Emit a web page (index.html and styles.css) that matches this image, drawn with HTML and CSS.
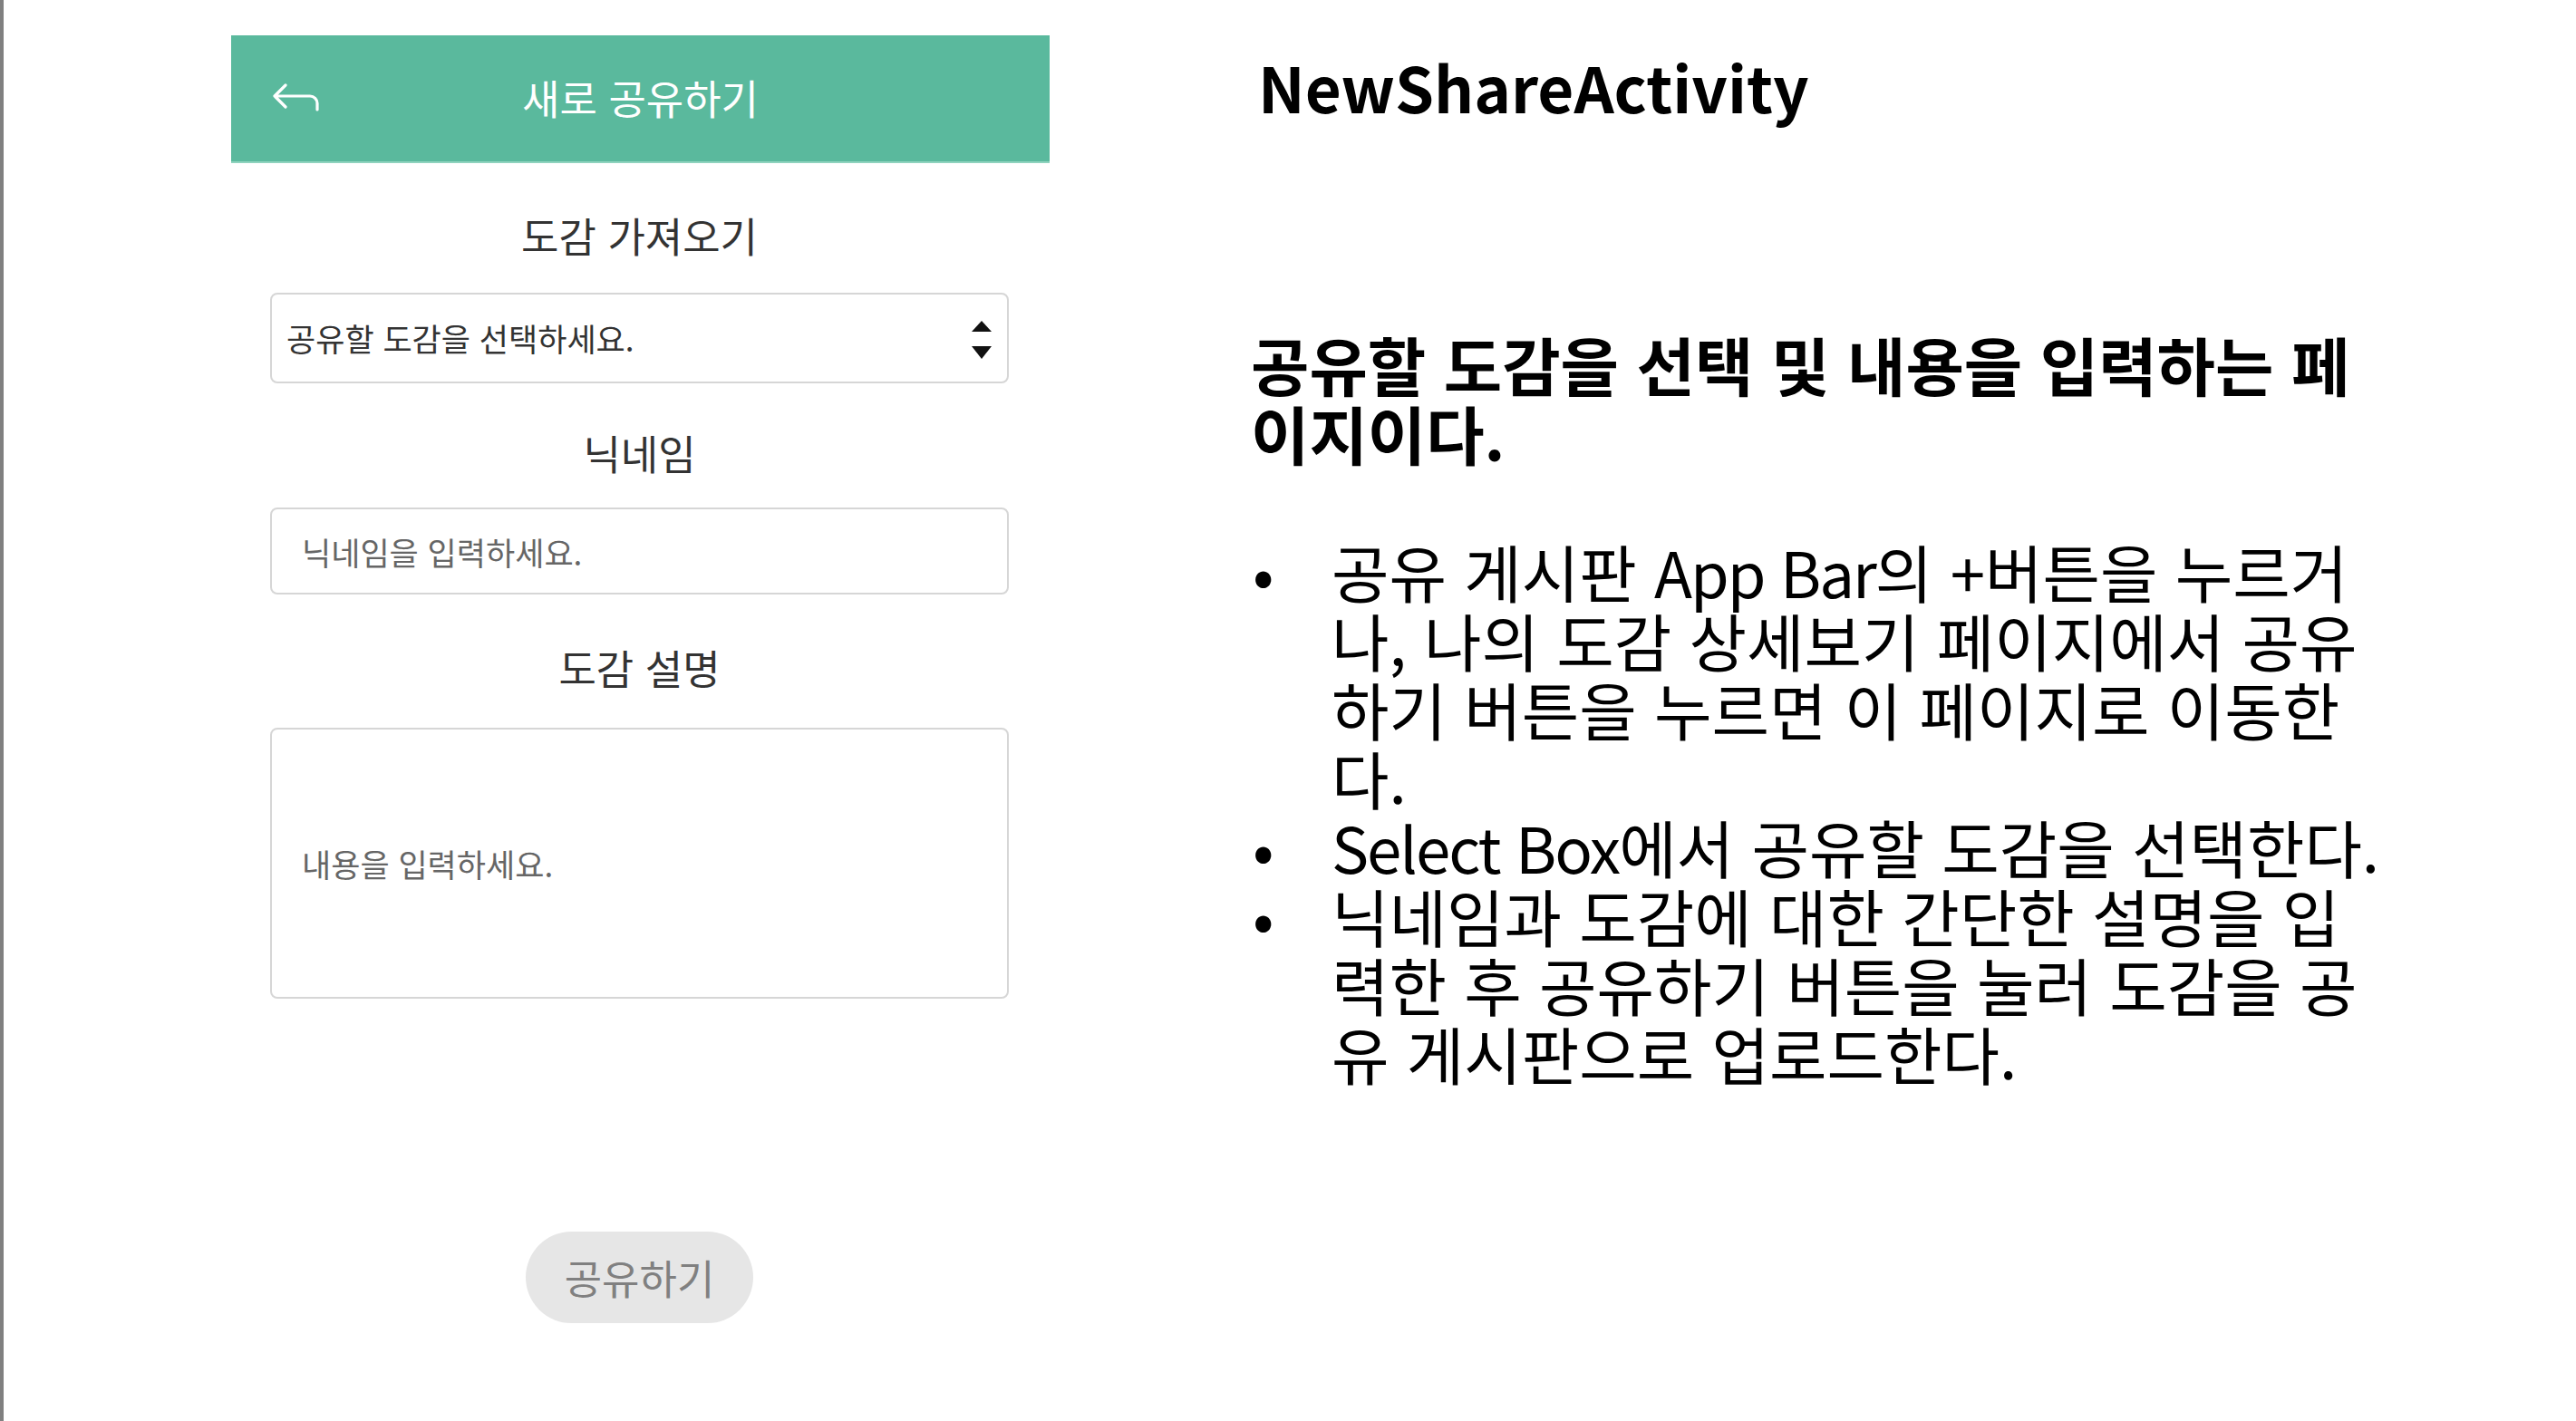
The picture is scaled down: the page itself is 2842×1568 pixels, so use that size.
FILE: index.html
```html
<!DOCTYPE html>
<html lang="ko">
<head>
<meta charset="utf-8">
<title>NewShareActivity</title>
<link rel="stylesheet" href="styles.css">
</head>
<body>
<div class="page">
  <section class="phone">
    <header class="appbar">
      <svg class="back-icon" viewBox="0 0 52 32" width="52" height="32" aria-hidden="true">
        <path d="M15 2 L3 14 L15 26 M3 14 H42 A8 8 0 0 1 50 22 V29" fill="none" stroke="#ffffff" stroke-width="3.2" stroke-linecap="round" stroke-linejoin="round"/>
      </svg>
      <h1 class="appbar-title">새로 공유하기</h1>
      <span class="appbar-spacer"></span>
    </header>
    <div class="form">
      <div class="field-label lbl-book">도감 가져오기</div>
      <div class="select">
        <span class="select-text">공유할 도감을 선택하세요.</span>
        <svg class="select-arrows" viewBox="0 0 22 42" width="22" height="42" aria-hidden="true">
          <path d="M0 12 L11 0 L22 12 Z" fill="#111"/>
          <path d="M0 28 L22 28 L11 42 Z" fill="#111"/>
        </svg>
      </div>
      <div class="field-label lbl-nick">닉네임</div>
      <div class="input">닉네임을 입력하세요.</div>
      <div class="field-label lbl-desc">도감 설명</div>
      <div class="textarea">내용을 입력하세요.</div>
      <button class="share-btn" type="button">공유하기</button>
    </div>
  </section>
  <section class="notes">
    <h2 class="notes-title">NewShareActivity</h2>
    <p class="notes-lead">공유할 도감을 선택 및 내용을 입력하는 페이지이다.</p>
    <ul class="notes-list">
      <li><span class="item-text">공유 게시판 <span class="en">App Bar</span>의 +버튼을 누르거나, 나의 도감 상세보기 페이지에서 공유하기 버튼을 누르면 이 페이지로 이동한다.</span></li>
      <li><span class="item-text"><span class="en">Select Box</span>에서 공유할 도감을 선택한다.</span></li>
      <li><span class="item-text">닉네임과 도감에 대한 간단한 설명을 입력한 후 공유하기 버튼을 눌러 도감을 공유 게시판으로 업로드한다.</span></li>
    </ul>
  </section>
</div>
</body>
</html>
```

FILE: styles.css
```css
* {
  box-sizing: border-box;
}

html, body {
  margin: 0;
  padding: 0;
  background: #ffffff;
}

body {
  min-height: 100vh;
  border-left: 4px solid #808080;
  font-family: "Noto Sans CJK KR", "Noto Sans", sans-serif;
}

.page {
  display: flex;
  align-items: flex-start;
  padding-left: 251px;
  gap: 222px;
}

/* ---------- phone screenshot ---------- */
.phone {
  width: 903px;
  flex: 0 0 903px;
  padding-top: 39px;
  display: flex;
  flex-direction: column;
}

.appbar {
  height: 141px;
  background: #5ab99d;
  border-bottom: 2px solid #8fd3be;
  display: grid;
  grid-template-columns: 1fr auto 1fr;
  align-items: center;
  padding: 0 45px 2px;
}

.back-icon {
  display: block;
  justify-self: start;
}

.appbar-title {
  margin: 0;
  font-size: 45px;
  font-weight: 400;
  color: #ffffff;
  line-height: 60px;
}

.form {
  display: flex;
  flex-direction: column;
  padding: 0 45px 0 43px;
}

.field-label {
  font-size: 45px;
  line-height: 60px;
  color: #333333;
  text-align: center;
}

.lbl-book { margin-top: 50px; }
.lbl-nick { margin-top: 47px; }
.lbl-desc { margin-top: 51px; }

.select {
  margin-top: 33px;
  height: 100px;
  border: 2px solid #d6d6d6;
  border-radius: 8px;
  display: flex;
  align-items: center;
  justify-content: space-between;
  padding: 0 17px 0 16px;
}

.select-text {
  font-size: 35px;
  line-height: 50px;
  color: #333333;
}

.select-arrows {
  display: block;
  margin-top: 4px;
}

.input {
  margin-top: 30px;
  height: 96px;
  border: 2px solid #d6d6d6;
  border-radius: 8px;
  display: flex;
  align-items: center;
  padding-left: 33px;
  font-size: 35px;
  color: #666666;
}

.textarea {
  margin-top: 36px;
  height: 299px;
  border: 2px solid #d6d6d6;
  border-radius: 8px;
  display: flex;
  align-items: center;
  padding-left: 33px;
  font-size: 35px;
  color: #666666;
}

.share-btn {
  margin-top: 257px;
  align-self: center;
  width: 251px;
  height: 101px;
  border: none;
  border-radius: 51px;
  background: #e6e6e6;
  color: #808080;
  font-family: inherit;
  font-size: 45px;
  padding: 0;
}

/* ---------- notes ---------- */
.notes {
  width: 1251px;
  flex: 0 0 1251px;
  padding-top: 52px;
  color: #000000;
}

.notes-title {
  margin: 0;
  padding-left: 8px;
  font-size: 69px;
  line-height: 86px;
  font-weight: 700;
}

.notes-lead {
  margin: 226px 0 0;
  font-size: 70px;
  line-height: 76px;
  font-weight: 700;
}

.notes-list {
  margin: 76px 0 0;
  padding: 0;
  list-style: none;
  font-size: 69px;
  line-height: 76px;
}

.notes-list li {
  display: flex;
}

.notes-list li::before {
  content: "•";
  flex: 0 0 87px;
  padding-left: 2px;
}

.item-text {
  flex: 1 1 auto;
  min-width: 0;
}

.en {
  display: inline-block;
  line-height: 76px;
  letter-spacing: -2px;
}
```
